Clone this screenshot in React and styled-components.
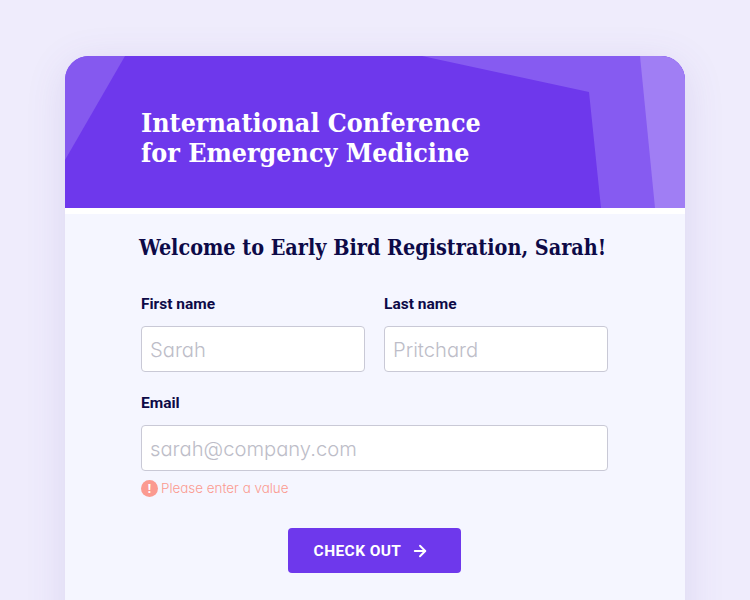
import React from 'react';
import styled, { createGlobalStyle } from 'styled-components';
import { ArrowRight } from 'lucide-react';

const GlobalStyle = createGlobalStyle`
    html, body {
        margin: 0;
        height: 600px;
        overflow: hidden;
        background: #efecfc;
    }
`;

const Page = styled.div`
    height: 600px;
    padding-top: 56px;
    box-sizing: border-box;
    overflow: hidden;
`;

const Card = styled.div`
    width: 620px;
    height: 600px;
    margin: 0 0 0 65px;
    border-radius: 24px 24px 0 0;
    background: #f5f6ff;
    box-shadow: 0 8px 40px rgba(90, 70, 170, 0.13);
    overflow: hidden;
`;

const Header = styled.header`
    position: relative;
    height: 152px;
    box-sizing: border-box;
    padding: 52px 0 0 76px;
    background: #6e38ec;
`;

const Shapes = styled.svg`
    position: absolute;
    inset: 0;
    width: 620px;
    height: 152px;
`;

const Title = styled.h1`
    position: relative;
    margin: 0;
    font-family: "DejaVu Serif", serif;
    font-stretch: condensed;
    font-size: 26.6px;
    line-height: 30px;
    font-weight: 700;
    color: #ffffff;
`;

const Stripe = styled.div`
    height: 6px;
    background: #ffffff;
`;

const Body = styled.div`
    padding: 0 77px 0 76px;
`;

const Heading = styled.h2`
    margin: 19px 0 0 -2px;
    font-family: "DejaVu Serif", serif;
    font-stretch: condensed;
    font-size: 21.4px;
    line-height: 30px;
    font-weight: 700;
    color: #0d0a47;
    white-space: nowrap;
`;

const Form = styled.form`
    display: grid;
    grid-template-columns: 224px 224px;
    column-gap: 19px;
    row-gap: 21px;
    margin-top: 31px;
`;

const Field = styled.div`
    grid-column: ${props => (props.$wide ? '1 / -1' : 'auto')};
    display: flex;
    flex-direction: column;
`;

const Label = styled.label`
    font-family: Roboto, sans-serif;
    font-size: 15.5px;
    line-height: 20px;
    font-weight: 700;
    color: #0d0a47;
    margin-bottom: 12px;
`;

const Input = styled.input`
    height: 46px;
    box-sizing: border-box;
    padding: 1px 8px 0;
    border: 1px solid #c9c9d6;
    border-radius: 4px;
    background: #ffffff;
    font-family: Inter, sans-serif;
    font-feature-settings: "cv11";
    font-size: 20.2px;
    font-weight: 300;
    color: #0d0a47;
    outline: none;
    &::placeholder {
        color: #bdbdc8;
        opacity: 1;
    }
`;

const ErrorRow = styled.div`
    display: flex;
    align-items: center;
    gap: 3px;
    margin-top: 8px;
    font-family: Inter, sans-serif;
    font-feature-settings: "cv11";
    font-size: 13.4px;
    font-weight: 300;
    line-height: 18px;
    color: #fb9a90;
`;

const ErrorDot = styled.span`
    width: 17px;
    height: 17px;
    border-radius: 50%;
    background: #fb9a90;
    color: #ffffff;
    font-family: "Noto Sans", sans-serif;
    font-size: 12px;
    font-weight: 700;
    line-height: 17px;
    text-align: center;
`;

const Actions = styled.div`
    display: flex;
    justify-content: center;
    margin-top: 31px;
`;

const Button = styled.button`
    display: flex;
    align-items: center;
    justify-content: center;
    gap: 10px;
    width: 173px;
    height: 45px;
    padding: 0 6px 0 0;
    border: 0;
    border-radius: 4px;
    background: #6e38ec;
    color: #ffffff;
    font-family: Roboto, sans-serif;
    font-size: 15.5px;
    font-weight: 700;
    letter-spacing: 0.4px;
`;

export default function App() {
    return (
        <Page>
            <GlobalStyle />
            <Card>
                <Header>
                    <Shapes viewBox="0 0 620 152">
                        <polygon points="0,104 60,0 0,0" fill="#8559ef" />
                        <polygon points="357,0 524,36 536,152 620,152 620,0" fill="#865bf1" />
                        <polygon points="575,0 590,152 620,152 620,0" fill="#a07ef4" />
                    </Shapes>
                    <Title>International Conference<br />for Emergency Medicine</Title>
                </Header>
                <Stripe />
                <Body>
                    <Heading>Welcome to Early Bird Registration, Sarah!</Heading>
                    <Form>
                        <Field>
                            <Label>First name</Label>
                            <Input placeholder="Sarah" />
                        </Field>
                        <Field>
                            <Label>Last name</Label>
                            <Input placeholder="Pritchard" />
                        </Field>
                        <Field $wide>
                            <Label>Email</Label>
                            <Input placeholder="sarah@company.com" />
                            <ErrorRow>
                                <ErrorDot>!</ErrorDot>
                                Please enter a value
                            </ErrorRow>
                        </Field>
                    </Form>
                    <Actions>
                        <Button type="button">
                            CHECK OUT
                            <ArrowRight size={18} strokeWidth={2.5} />
                        </Button>
                    </Actions>
                </Body>
            </Card>
        </Page>
    );
}
